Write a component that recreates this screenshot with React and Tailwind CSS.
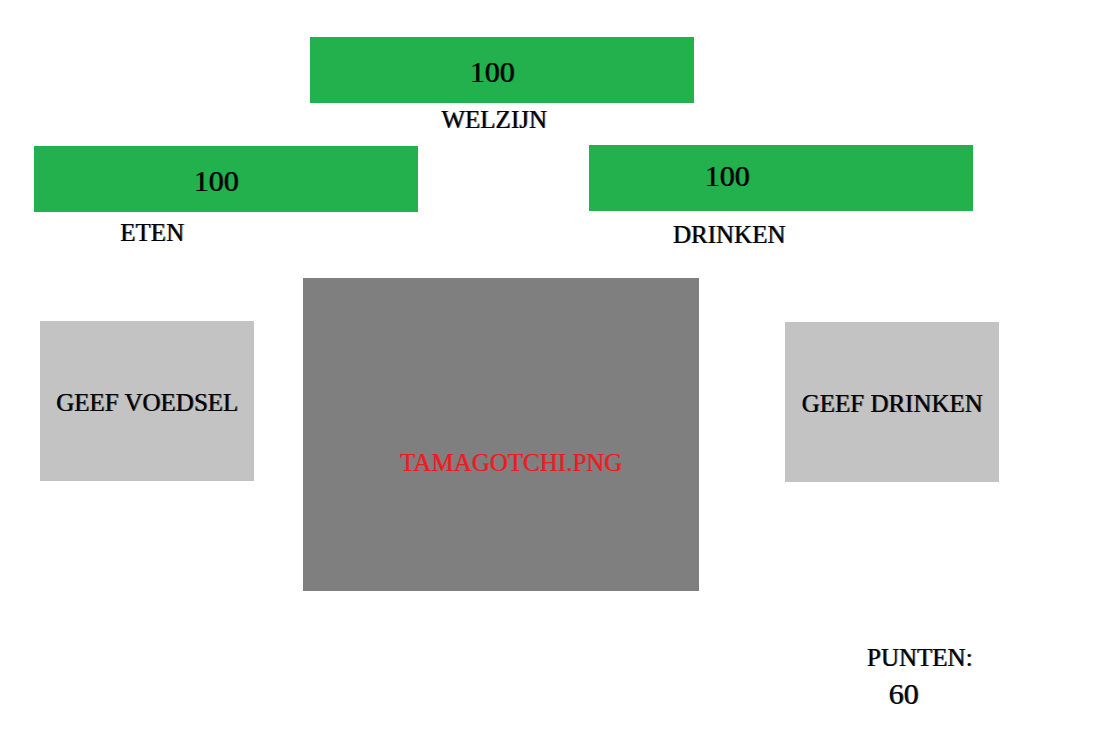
import React from "react";

function Meter({ id, label, value, barClass, labelClass }) {
  return (
    <div>
      <div
        role="meter"
        aria-labelledby={id}
        aria-valuemin={0}
        aria-valuemax={100}
        aria-valuenow={value}
        className={`flex h-[66px] items-center justify-center bg-[#22b14c] text-[30px] leading-8 ${barClass}`}
      >
        {value}
      </div>
      <div id={id} className={`text-center leading-8 ${labelClass}`}>
        {label}
      </div>
    </div>
  );
}

function ActionButton({ children }) {
  return (
    <button
      type="button"
      className="h-40 w-full whitespace-nowrap bg-[#c3c3c3] pt-1 text-center leading-8 [text-shadow:1px_0_0_rgba(0,0,0,0.6)]"
    >
      {children}
    </button>
  );
}

export default function App() {
  return (
    <main className="min-h-screen bg-white pt-[37px] pb-4 font-['Algerian','Liberation_Serif',serif] text-[25px] leading-8 text-black [text-shadow:1px_0_0_rgba(0,0,0,0.6)]">
      <section className="grid grid-cols-[310fr_384fr_422fr]">
        <div className="col-start-2">
          <Meter id="welzijn" label="WELZIJN" value={100} barClass="pt-1 pr-5" labelClass="pt-px pr-4" />
        </div>
      </section>

      <section className="mt-[9px] grid grid-cols-[34fr_384fr_171fr_384fr_143fr]">
        <div className="col-start-2 pt-px">
          <Meter id="eten" label="ETEN" value={100} barClass="pt-1 pr-5" labelClass="pt-[5px] pr-[148px]" />
        </div>
        <div className="col-start-4">
          <Meter id="drinken" label="DRINKEN" value={100} barClass="pb-1 pr-[108px]" labelClass="pt-2 pr-[104px]" />
        </div>
      </section>

      <section className="mt-[27px] grid grid-cols-[40fr_214fr_49fr_396fr_86fr_214fr_117fr] items-start">
        <div className="col-start-2 pt-[43px]">
          <ActionButton>GEEF VOEDSEL</ActionButton>
        </div>
        <div className="col-start-4 flex h-[313px] items-center justify-center bg-[#7f7f7f] pt-14 pl-5 text-[#ed1c24] [text-shadow:1px_0_0_rgba(237,28,36,0.6)]">
          TAMAGOTCHI.PNG
        </div>
        <div className="col-start-6 pt-11">
          <ActionButton>GEEF DRINKEN</ActionButton>
        </div>
      </section>

      <section className="mt-[49px] grid grid-cols-[869fr_103fr_144fr] text-center leading-9">
        <div className="col-start-2">
          <div className="whitespace-nowrap">PUNTEN:</div>
          <div className="pr-8 text-[30px] leading-9">60</div>
        </div>
      </section>
    </main>
  );
}
